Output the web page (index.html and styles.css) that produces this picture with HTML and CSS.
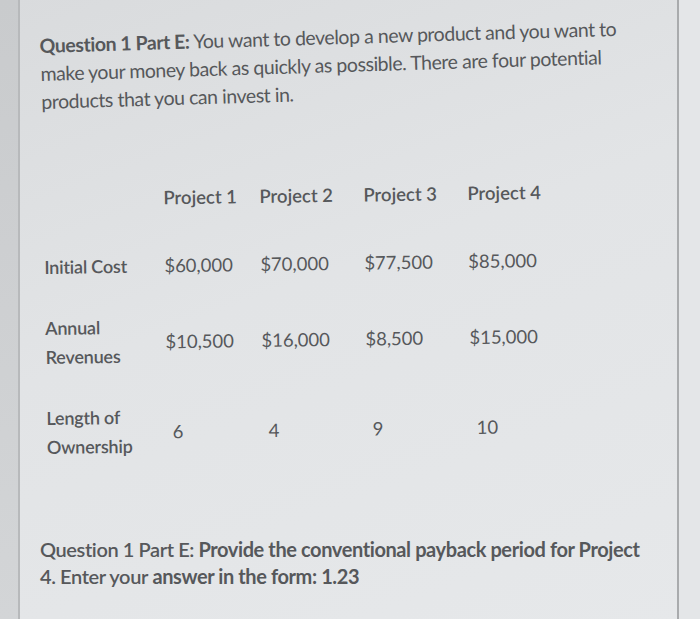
FILE: index.html
```html
<!DOCTYPE html>
<html>
<head>
<meta charset="utf-8">
<link rel="stylesheet" href="styles.css">
</head>
<body>
<div class="screen">
  <div class="band-left"></div>
  <div class="page">
    <p class="intro"><span class="b">Question 1 Part E:</span> You want to develop a new product and you want to<br>make your money back as quickly as possible. There are four potential<br>products that you can invest in.</p>
    <div class="table">
      <div class="row r1">
        <div class="label"></div>
        <div class="cell c1 head">Project 1</div>
        <div class="cell c2 head">Project 2</div>
        <div class="cell c3 head">Project 3</div>
        <div class="cell c4 head">Project 4</div>
      </div>
      <div class="row r2">
        <div class="label">Initial Cost</div>
        <div class="cell c1">$60,000</div>
        <div class="cell c2">$70,000</div>
        <div class="cell c3">$77,500</div>
        <div class="cell c4">$85,000</div>
      </div>
      <div class="row r3">
        <div class="label">Annual<br>Revenues</div>
        <div class="cell c1">$10,500</div>
        <div class="cell c2">$16,000</div>
        <div class="cell c3">$8,500</div>
        <div class="cell c4">$15,000</div>
      </div>
      <div class="row r4">
        <div class="label">Length of<br>Ownership</div>
        <div class="cell c1 num">6</div>
        <div class="cell c2 num">4</div>
        <div class="cell c3 num">9</div>
        <div class="cell c4 num">10</div>
      </div>
    </div>
    <p class="question"><span class="m">Question 1 Part E:</span> Provide the conventional payback period for Project<br><span class="m">4. Enter your</span> answer in the form: 1.23</p>
  </div>
  <div class="band-right"></div>
</div>
</body>
</html>
```
FILE: styles.css
```css
html, body {
  margin: 0;
  padding: 0;
  width: 700px;
  height: 619px;
  overflow: hidden;
}
body {
  font-family: Lato, "Open Sans", sans-serif;
  color: #56585b;
}
.screen {
  display: flex;
  width: 700px;
  height: 619px;
  background: linear-gradient(160deg, #d9dbdd 0%, #e2e4e6 45%, #e6e8ea 100%);
}
.band-left {
  width: 18px;
  flex: none;
  background: linear-gradient(180deg, #c9cbcd, #d3d5d7);
  border-right: 2px solid #b7b9bb;
}
.band-right {
  width: 21px;
  flex: none;
  border-left: 2px solid #a9abad;
  background: #e4e6e8;
}
.page {
  flex: 1;
  padding-left: 20px;
}
.intro {
  margin: 0;
  padding-top: 32px;
  white-space: nowrap;
  font-size: 19.5px;
  line-height: 28px;
  letter-spacing: -0.45px;
  transform: rotate(-1.7deg);
  transform-origin: left center;
}
.b { font-weight: 700; }
.m { font-weight: 600; }
.table {
  margin-left: 5px;
  margin-top: 54px;
  transform: rotate(-0.8deg);
  transform-origin: left center;
  font-size: 18.5px;
  letter-spacing: 0;
  white-space: nowrap;
}
.row {
  display: flex;
  align-items: center;
  min-height: 58px;
}
.r2 { margin-top: 10px; }
.r3 { margin-top: 18px; }
.r4 { margin-top: 32px; }
.label {
  width: 120px;
  flex: none;
  font-size: 18px;
  font-weight: 600;
  line-height: 29px;
  letter-spacing: -0.2px;
}
.cell {
  flex: none;
}
.c1 { width: 96px; }
.c2 { width: 104px; }
.c3 { width: 104px; }
.c4 { width: 100px; }
.head { font-weight: 600; }
.num { padding-left: 6px; box-sizing: border-box; }
.question {
  margin: 74px 0 0;
  white-space: nowrap;
  font-size: 20px;
  line-height: 27px;
  font-weight: 700;
  letter-spacing: -0.4px;
}
```
